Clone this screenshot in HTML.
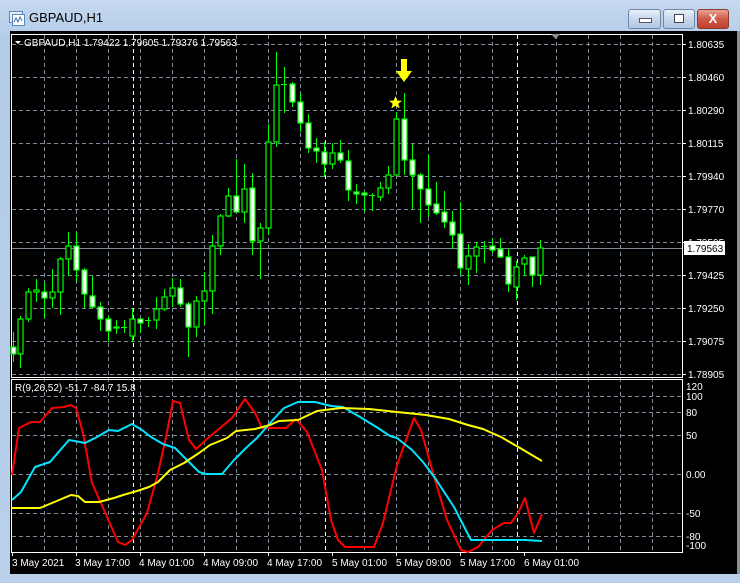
<!DOCTYPE html>
<html><head><meta charset="utf-8"><style>
html,body{margin:0;padding:0;width:740px;height:583px;overflow:hidden;background:#bcd3ec;font-family:"Liberation Sans",sans-serif}
.win{position:absolute;left:0;top:0;width:740px;height:583px;background:linear-gradient(#c5d9ef,#b3cce8 40px,#b8d0ea);}
.title{position:absolute;left:29px;top:10px;font-size:13px;color:#000}
.btn{position:absolute;top:9px;height:18px;border:1px solid #6f87a6;border-radius:3px;background:linear-gradient(#eaf1f9,#c6d7ec 50%,#b2c8e2)}
</style></head><body><div class="win">
<svg style="position:absolute;left:9px;top:11px" width="16" height="15" viewBox="0 0 16 15"><rect x="0.5" y="0.5" width="13" height="11" fill="#e6f0fb" stroke="#5b86c0"/><rect x="3.5" y="3.5" width="12" height="11" fill="#fff" stroke="#5b86c0"/><path d="M5 11l2-4 2 4 2-5 2 4" stroke="#3f6fb0" fill="none"/></svg>
<div class="title">GBPAUD,H1</div>
<div class="btn" style="left:628px;width:31px"><div style="position:absolute;left:10px;top:8px;width:11px;height:3px;background:#fff;border:1px solid #556"></div></div>
<div class="btn" style="left:663px;width:30px"><div style="position:absolute;left:10px;top:4px;width:8px;height:7px;border:1px solid #445;background:#fff"></div></div>
<div class="btn" style="left:697px;width:30px;border-color:#8b3a30;background:linear-gradient(#e9a395,#cf5a48 50%,#c0412f)"><div style="position:absolute;left:0;top:0;width:30px;text-align:center;color:#fff;font-weight:bold;font-size:13px;line-height:18px">X</div></div>
<svg style="position:absolute;left:0;top:0" width="740" height="583" font-family="Liberation Sans, sans-serif">
<rect x="10" y="31" width="727" height="543" fill="#000"/>
<rect x="737" y="31" width="3" height="543" fill="#8a8f96"/>
<g stroke="#7f8b99" stroke-dasharray="4,3" stroke-width="1">
<path d="M12 44.5H682M12 77.5H682M12 110.5H682M12 143.5H682M12 176.5H682M12 209.5H682M12 242.5H682M12 275.5H682M12 308.5H682M12 341.5H682M12 374.5H682"/>
<path d="M12 396.5H682M12 412.5H682M12 435.5H682M12 474.5H682M12 513.5H682M12 536.5H682"/>
<path d="M44.5 35V552M76.5 35V552M108.5 35V552M140.5 35V552M172.5 35V552M204.5 35V552M236.5 35V552M268.5 35V552M300.5 35V552M364.5 35V552M396.5 35V552M428.5 35V552M460.5 35V552M492.5 35V552M556.5 35V552M588.5 35V552M620.5 35V552M652.5 35V552"/>
</g>
<g stroke="#fff" stroke-dasharray="4,3"><path d="M133.5 35V552M325.5 35V552M517.5 35V552"/></g>
<line x1="12" y1="248.5" x2="682" y2="248.5" stroke="#7d8894"/>
<rect x="11.5" y="34.5" width="671" height="343" fill="none" stroke="#fff"/>
<rect x="11.5" y="379.5" width="671" height="173" fill="none" stroke="#fff"/>
<path d="M551 34h9l-4.5 5z" fill="#8a8f96"/>
<g stroke="#fff"><path d="M682 44.5h4M682 77.5h4M682 110.5h4M682 143.5h4M682 176.5h4M682 209.5h4M682 242.5h4M682 275.5h4M682 308.5h4M682 341.5h4M682 374.5h4M12.5 552v4M76.5 552v4M140.5 552v4M204.5 552v4M268.5 552v4M332.5 552v4M396.5 552v4M460.5 552v4M524.5 552v4"/></g>
<g fill="#fff" font-size="10">
<text x="688" y="48">1.80635</text><text x="688" y="81">1.80460</text><text x="688" y="114">1.80290</text><text x="688" y="147">1.80115</text><text x="688" y="180">1.79940</text><text x="688" y="213">1.79770</text><text x="688" y="246">1.79595</text><text x="688" y="279">1.79425</text><text x="688" y="312">1.79250</text><text x="688" y="345">1.79075</text><text x="688" y="378">1.78905</text>
<text x="686" y="390">120</text><text x="686" y="400">100</text><text x="686" y="416">80</text><text x="686" y="439">50</text><text x="686" y="478">0.00</text><text x="686" y="517">-50</text><text x="686" y="540">-80</text><text x="686" y="549">-100</text>
<text x="12" y="566">3 May 2021</text><text x="75" y="566">3 May 17:00</text><text x="139" y="566">4 May 01:00</text><text x="203" y="566">4 May 09:00</text><text x="267" y="566">4 May 17:00</text><text x="332" y="566">5 May 01:00</text><text x="396" y="566">5 May 09:00</text><text x="460" y="566">5 May 17:00</text><text x="524" y="566">6 May 01:00</text>
<text x="24" y="46">GBPAUD,H1  1.79422 1.79605 1.79376 1.79563</text>
<text x="15" y="391">R(9,26,52) -51.7 -84.7 15.8</text>
</g>
<path d="M15 41h6l-3 3z" fill="#fff"/>
<rect x="684" y="241" width="41" height="14" fill="#fff"/><text x="687" y="252" font-size="10" fill="#000">1.79563</text>
<g stroke="#00ff00" stroke-width="1">
<path d="M13.5 332V362M20.5 316V368M28.5 288V322M36.5 279V302M44.5 282V318M52.5 269V308M60.5 257V315M68.5 232V276M76.5 232V282M84.5 268V308M92.5 276V308M100.5 302V331M108.5 316V342M116.5 320V334M124.5 320V333M132.5 308V342M140.5 318V333M148.5 317V327M156.5 297V329M164.5 289V311M172.5 278V307M180.5 279V307M188.5 302V357M196.5 296V337M204.5 272V325M212.5 235V314M220.5 214V255M228.5 188V217M236.5 159V212M244.5 164V223M252.5 173V255M260.5 223V279M268.5 124V235M276.5 52V147M284.5 67V113M292.5 82V107M300.5 93V132M308.5 114V153M316.5 138V163M324.5 142V177M332.5 143V169M340.5 140V163M348.5 150V201M356.5 184V204M364.5 191V212M372.5 193V211M380.5 182V201M388.5 166V194M396.5 112V175M404.5 93V175M412.5 144V209M420.5 173V223M428.5 155V217M436.5 182V215M444.5 191V228M452.5 211V249M460.5 202V275M468.5 244V285M476.5 242V273M484.5 241V263M492.5 238V253M500.5 238V258M508.5 249V292M516.5 261V300M524.5 255V276M532.5 257V287M540.5 240V285"/>
<path d="M114 327.5h5M121 327.5h6M145 320.5h6M281 84.5h6M369 195.5h6M481 246.5h6"/>
</g>
<g stroke="#00ff00" stroke-width="1.2" fill="#fff">
<rect x="11" y="347" width="5" height="7"/><rect x="42" y="292" width="5" height="6"/><rect x="74" y="246" width="5" height="24"/><rect x="82" y="270" width="5" height="24"/><rect x="90" y="296" width="5" height="11"/><rect x="98" y="307" width="5" height="12"/><rect x="106" y="319" width="5" height="12"/><rect x="138" y="319" width="5" height="4"/><rect x="178" y="288" width="5" height="16"/><rect x="186" y="304" width="5" height="23"/><rect x="234" y="196" width="5" height="16"/><rect x="250" y="188" width="5" height="53"/><rect x="290" y="84" width="5" height="18"/><rect x="298" y="102" width="5" height="21"/><rect x="306" y="123" width="5" height="25"/><rect x="314" y="148" width="5" height="3"/><rect x="322" y="152" width="5" height="12"/><rect x="338" y="153" width="5" height="7"/><rect x="346" y="161" width="5" height="29"/><rect x="354" y="192" width="5" height="2"/><rect x="362" y="193" width="5" height="2"/><rect x="402" y="119" width="5" height="41"/><rect x="410" y="160" width="5" height="15"/><rect x="418" y="175" width="5" height="14"/><rect x="426" y="189" width="5" height="16"/><rect x="434" y="204" width="5" height="9"/><rect x="442" y="212" width="5" height="10"/><rect x="450" y="222" width="5" height="13"/><rect x="458" y="234" width="5" height="34"/><rect x="490" y="246" width="5" height="4"/><rect x="498" y="249" width="5" height="8"/><rect x="506" y="257" width="5" height="27"/><rect x="530" y="257" width="5" height="18"/>
</g>
<g stroke="#00ff00" stroke-width="1.2" fill="#000">
<rect x="18" y="319" width="5" height="35"/><rect x="26" y="292" width="5" height="27"/><rect x="34" y="290" width="5" height="2"/><rect x="50" y="292" width="5" height="6"/><rect x="58" y="259" width="5" height="33"/><rect x="66" y="246" width="5" height="13"/><rect x="114" y="327" width="5" height="1"/><rect x="130" y="319" width="5" height="17"/><rect x="154" y="309" width="5" height="11"/><rect x="162" y="297" width="5" height="12"/><rect x="170" y="288" width="5" height="8"/><rect x="194" y="301" width="5" height="26"/><rect x="202" y="291" width="5" height="10"/><rect x="210" y="246" width="5" height="45"/><rect x="218" y="216" width="5" height="30"/><rect x="226" y="196" width="5" height="20"/><rect x="242" y="189" width="5" height="23"/><rect x="258" y="228" width="5" height="13"/><rect x="266" y="142" width="5" height="86"/><rect x="274" y="85" width="5" height="57"/><rect x="330" y="153" width="5" height="11"/><rect x="378" y="188" width="5" height="9"/><rect x="386" y="175" width="5" height="13"/><rect x="394" y="119" width="5" height="56"/><rect x="466" y="256" width="5" height="13"/><rect x="474" y="247" width="5" height="9"/><rect x="514" y="267" width="5" height="20"/><rect x="522" y="258" width="5" height="6"/><rect x="538" y="248" width="5" height="27"/>
</g>
<path d="M401 59h6v12h5l-8 11-8-11h5z" fill="#ffff00"/>
<path d="M395.5 96l1.8 4.6 4.8.2-3.8 3 1.4 4.7-4.2-2.7-4.2 2.7 1.4-4.7-3.8-3 4.8-.2z" fill="#ffff00"/>
<g fill="none" stroke-width="2" stroke-linejoin="round">
<polyline stroke="#ff0000" points="12,475 19,428 31,422 40,422 52,408 64,407 71,405 76,408 83,433 92,483 104,510 118,542 125,545 132,540 147,513 158,473 166,437 173,401 180,403 189,440 196,449 208,438 220,428 232,418 245,399 255,413 262,428 286,428 296,419 307,432 322,470 331,520 338,540 345,547 374,547 383,523 397,465 414,418 421,430 435,480 447,520 461,550 468,552 478,547 492,530 504,523 511,523 518,513 525,498 534,533 542,514"/>
<polyline stroke="#00e5ff" points="12,500 21,492 35,467 50,462 69,440 85,443 97,437 109,430 118,431 132,424 142,430 151,437 163,444 175,448 187,460 199,472 206,474 222,474 234,460 246,448 258,437 270,423 284,408 298,402 315,402 331,406 343,407 360,417 378,428 390,436 397,438 412,450 423,462 435,478 454,507 471,540 525,540 542,541"/>
<polyline stroke="#ffff00" points="12,508 40,508 52,503 71,495 78,496 85,502 99,502 114,498 123,495 137,491 149,487 158,482 170,470 184,463 199,453 210,445 227,438 236,431 255,429 270,425 279,421 298,420 317,411 341,408 369,409 397,412 426,415 449,419 468,425 483,429 501,437 520,448 542,461"/>
</g>
</svg></div></body></html>
